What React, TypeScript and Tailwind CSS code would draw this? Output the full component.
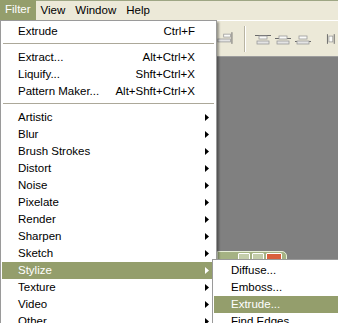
import React from "react";

type Item = {
  label?: string;
  shortcut?: string;
  sub?: boolean;
  active?: boolean;
  sep?: boolean;
};

const menuBar = ["Filter", "View", "Window", "Help"];

const filterItems: Item[] = [
  { label: "Extrude", shortcut: "Ctrl+F" },
  { sep: true },
  { label: "Extract...", shortcut: "Alt+Ctrl+X" },
  { label: "Liquify...", shortcut: "Shft+Ctrl+X" },
  { label: "Pattern Maker...", shortcut: "Alt+Shft+Ctrl+X" },
  { sep: true },
  { label: "Artistic", sub: true },
  { label: "Blur", sub: true },
  { label: "Brush Strokes", sub: true },
  { label: "Distort", sub: true },
  { label: "Noise", sub: true },
  { label: "Pixelate", sub: true },
  { label: "Render", sub: true },
  { label: "Sharpen", sub: true },
  { label: "Sketch", sub: true },
  { label: "Stylize", sub: true, active: true },
  { label: "Texture", sub: true },
  { label: "Video", sub: true },
  { label: "Other", sub: true },
];

const stylizeItems: Item[] = [
  { label: "Diffuse..." },
  { label: "Emboss..." },
  { label: "Extrude...", active: true },
  { label: "Find Edges" },
];

function Arrow({ white }: { white?: boolean }) {
  return (
    <svg width="4" height="7" viewBox="0 0 4 7">
      <path d="M0 0 L4 3.5 L0 7 Z" fill={white ? "#ffffff" : "#000000"} />
    </svg>
  );
}

function AlignIcon({ kind }: { kind: number }) {
  // small distribute / align glyphs from the options bar
  const tops = [2, 5, 8];
  return (
    <svg width="18" height="12" viewBox="0 0 18 12">
      <line x1="1" y1={tops[kind] + 0.5} x2="17" y2={tops[kind] + 0.5} stroke="#6b6b6b" />
      <rect x="5" y="3" width="8" height="3" fill="#fbfbf8" stroke="#9a9a9a" strokeWidth="0.8" />
      <rect x="3" y="8" width="12" height="3" fill="#e4e4e4" stroke="#9a9a9a" strokeWidth="0.8" />
    </svg>
  );
}

export default function App() {
  return (
    <div className="relative h-[323px] w-[338px] overflow-hidden bg-[#ece9d8] font-['Liberation_Sans',Arial,sans-serif] text-[11.5px] text-black">
      {/* menu bar */}
      <div className="flex h-[20px] items-stretch border-t border-[#9ea684]">
        {menuBar.map((m, i) => (
          <div
            key={m}
            className={[
              "flex items-center px-[5px] leading-none",
              i === 0 ? "-mt-px bg-[#949e6c] text-white" : "",
            ].join(" ")}
          >
            {m}
          </div>
        ))}
      </div>

      {/* options bar */}
      <div className="flex h-[36px] items-center border-t border-white pl-[214px]">
        <svg width="20" height="14" viewBox="0 0 20 14" className="mt-[1px]">
          <rect x="10" y="2" width="7" height="3" fill="#fbfbf8" stroke="#9a9a9a" strokeWidth="0.8" />
          <rect x="4" y="7" width="13" height="3" fill="#e4e4e4" stroke="#9a9a9a" strokeWidth="0.8" />
          <line x1="18.5" y1="0" x2="18.5" y2="12" stroke="#6b6b6b" />
        </svg>
        <div className="ml-[11px] mr-[8px] h-[26px] w-[2px] border-l border-[#b8b4a2] bg-white" />
        <div className="flex gap-[2px]">
          <AlignIcon kind={0} />
          <AlignIcon kind={1} />
          <AlignIcon kind={2} />
        </div>
        <svg width="12" height="12" viewBox="0 0 12 12" className="ml-[14px]">
          <line x1="1.5" y1="1" x2="1.5" y2="11" stroke="#6b6b6b" />
          <rect x="3" y="3" width="4" height="6" fill="#fbfbf8" stroke="#9a9a9a" strokeWidth="0.8" />
          <line x1="8.5" y1="1" x2="8.5" y2="11" stroke="#6b6b6b" />
        </svg>
      </div>

      {/* workspace */}
      <div className="h-[267px] border-t border-[#9d9d9d] bg-[#808080]" />

      {/* background document window, minimized */}
      <div className="absolute left-[217px] top-[251px] flex h-[12px] w-[70px] items-center justify-end gap-[2px] rounded-tr-[5px] border border-[#e8efd8] bg-[#a5b283] pr-[4px]">
        <div className="h-[8px] w-[12px] rounded-[1px] border border-white bg-[#c4cdaa]" />
        <div className="h-[8px] w-[12px] rounded-[1px] border border-white bg-[#c4cdaa]" />
        <div className="h-[8px] w-[16px] rounded-[1px] border border-white bg-[#d9603c]" />
      </div>

      {/* Filter menu */}
      <div className="absolute left-0 top-[20px] w-[217px] border border-[#9a9a9a] bg-white p-px pt-[2px] shadow-[2px_2px_2px_rgba(0,0,0,0.35)]">
        {filterItems.map((it, i) =>
          it.sep ? (
            <div key={i} className="h-[9px] pt-[3px]">
              <div className="mx-px h-px bg-[#aca899]" />
            </div>
          ) : (
            <div
              key={i}
              className={[
                "flex h-[17px] items-center pl-[16px] leading-none",
                it.active ? "bg-[#949e6c] text-white" : "",
              ].join(" ")}
            >
              <span className="flex-1 whitespace-nowrap">{it.label}</span>
              {it.shortcut && <span className="whitespace-nowrap">{it.shortcut}</span>}
              <span className="flex w-[20px] justify-start pl-[10px]">
                {it.sub && <Arrow white={it.active} />}
              </span>
            </div>
          )
        )}
      </div>

      {/* Stylize submenu */}
      <div className="absolute left-[212px] top-[259px] w-[140px] border border-[#9a9a9a] bg-white p-px pt-[2px]">
        {stylizeItems.map((it) => (
          <div
            key={it.label}
            className={[
              "flex h-[17px] items-center pl-[17px] leading-none",
              it.active ? "bg-[#949e6c] text-white" : "",
            ].join(" ")}
          >
            {it.label}
          </div>
        ))}
      </div>
    </div>
  );
}
